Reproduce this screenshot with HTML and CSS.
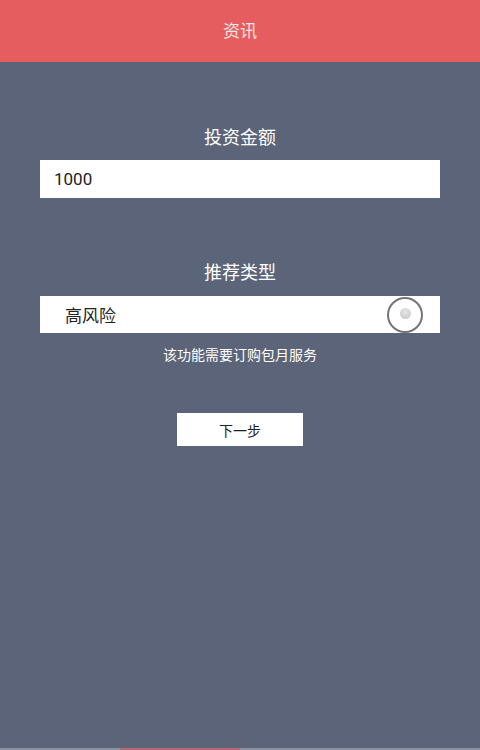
FILE: index.html
```html
<!DOCTYPE html>
<html lang="zh">
<head>
<meta charset="utf-8">
<title>资讯</title>
<link rel="stylesheet" href="styles.css">
</head>
<body>
<div class="app">
  <header class="topbar">资讯</header>
  <main class="content">
    <div class="label label-first">投资金额</div>
    <div class="field field-input"><span class="field-text">1000</span></div>
    <div class="label label-second">推荐类型</div>
    <div class="field field-select">
      <span class="select-text">高风险</span>
      <span class="radio"><span class="radio-dot"></span></span>
    </div>
    <div class="note">该功能需要订购包月服务</div>
    <div class="btn-row"><div class="btn">下一步</div></div>
  </main>
  <div class="bottom-strip"><span class="bottom-active"></span></div>
</div>
</body>
</html>
```
FILE: styles.css
```css
html, body {
  margin: 0;
  padding: 0;
}
body {
  width: 480px;
  height: 750px;
  overflow: hidden;
  background: #5b6478;
  font-family: "Noto Sans CJK SC", "Noto Sans", sans-serif;
}
.app {
  display: flex;
  flex-direction: column;
  height: 750px;
}
.topbar {
  height: 62px;
  box-sizing: border-box;
  padding-bottom: 3px;
  background: #e55d5f;
  color: #f8e4e4;
  font-size: 17px;
  display: flex;
  align-items: center;
  justify-content: center;
  flex-shrink: 0;
}
.content {
  flex: 1;
  display: flex;
  flex-direction: column;
  padding: 0 40px;
}
.label {
  color: #ffffff;
  font-size: 18px;
  text-align: center;
  line-height: 24px;
}
.label-first {
  margin-top: 62px;
  margin-bottom: 12px;
}
.label-second {
  margin-top: 61px;
  margin-bottom: 13px;
}
.field {
  background: #ffffff;
  display: flex;
  align-items: center;
  font-size: 17px;
  color: #222222;
}
.field-input {
  height: 38px;
}
.field-select {
  height: 37px;
  justify-content: space-between;
}
.field-text {
  padding-left: 14px;
  font-family: Roboto, "Noto Sans", sans-serif;
}
.select-text {
  padding-left: 25px;
}
.radio {
  width: 36px;
  height: 36px;
  border: 2px solid #747474;
  border-radius: 50%;
  margin-right: 17px;
  margin-top: 1px;
  display: flex;
  align-items: center;
  justify-content: center;
  box-sizing: border-box;
}
.radio-dot {
  width: 11px;
  height: 11px;
  border-radius: 50%;
  background: radial-gradient(circle at 50% 35%, #e6e6e6 0%, #cfcfcf 70%, #bdbdbd 100%);
  margin-top: -3px;
}
.note {
  color: #ffffff;
  font-size: 14px;
  text-align: center;
  margin-top: 11px;
  line-height: 20px;
}
.btn-row {
  display: flex;
  justify-content: center;
  margin-top: 49px;
}
.btn {
  width: 126px;
  height: 33px;
  background: #ffffff;
  color: #222222;
  font-size: 14px;
  display: flex;
  align-items: center;
  justify-content: center;
}
.bottom-strip {
  height: 2px;
  background: #8a92a2;
  flex-shrink: 0;
  display: flex;
}
.bottom-active {
  margin-left: 120px;
  width: 120px;
  background: #b06a72;
}
```
